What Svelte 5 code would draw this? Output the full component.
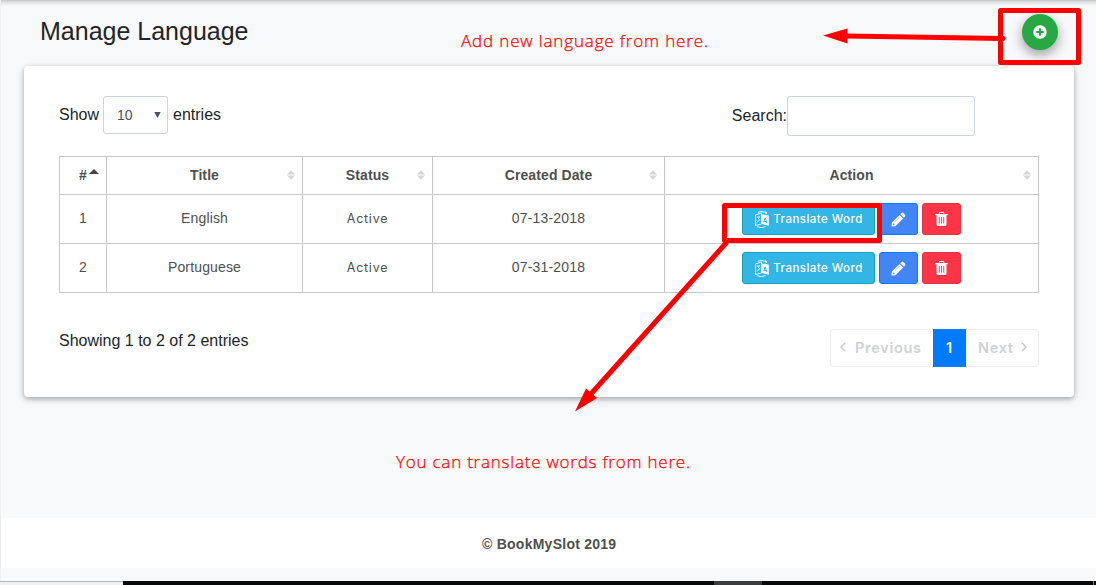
<script>
  const columns = [
    { label: '#', sort: 'asc' },
    { label: 'Title', sort: 'both' },
    { label: 'Status', sort: 'both' },
    { label: 'Created Date', sort: 'both' },
    { label: 'Action', sort: 'both' }
  ];
  const rows = [
    { id: 1, title: 'English', status: 'Active', created: '07-13-2018' },
    { id: 2, title: 'Portuguese', status: 'Active', created: '07-31-2018' }
  ];
</script>

<div class="page">
  <header>
    <h1>Manage Language</h1>
    <button class="add" aria-label="Add language">
      <svg width="14" height="14" viewBox="0 0 14 14">
        <path fill="#fff" fill-rule="evenodd" d="M7 .3a6.7 6.7 0 1 1 0 13.4A6.7 6.7 0 0 1 7 .3ZM6 3.2V6H3.2v2H6v2.8h2V8h2.8V6H8V3.2Z" />
      </svg>
    </button>
  </header>

  <main class="card">
    <div class="controls">
      <label class="length">Show
        <span class="select"><span>10</span><svg width="7" height="6" viewBox="0 0 7 6"><path d="M.3 0h6.4L3.5 6Z" fill="#495057" /></svg></span>
        entries</label>
      <label class="search">Search:<input type="text" aria-label="Search" /></label>
    </div>

    <table>
      <thead>
        <tr>
          {#each columns as col}
            <th>
              <div class="head">
                <span class="label">{col.label}</span>
                {#if col.sort === 'asc'}
                  <svg class="asc" width="10" height="5" viewBox="0 0 10 5"><path d="M5 0l5 5H0Z" fill="#444" /></svg>
                {:else}
                  <svg class="both" width="8" height="10" viewBox="0 0 8 10"><path d="M4 0l4 4.5H0ZM0 5.5h8L4 10Z" fill="#d6d6d6" /></svg>
                {/if}
              </div>
            </th>
          {/each}
        </tr>
      </thead>
      <tbody>
        {#each rows as row}
          <tr>
            <td>{row.id}</td>
            <td>{row.title}</td>
            <td class="status">{row.status}</td>
            <td class="date">{row.created}</td>
            <td class="action">
              <div class="actions">
                <button class="btn translate">
                  <svg width="16" height="17" viewBox="0 0 16 17" fill="none" stroke="#fff">
                    <path d="M1.5 4 7.5 2v11l-6 1.5Z" stroke-width=".9" />
                    <path d="M7.5 3.3 14.8 4.6v10.2L7.5 13Z" fill="#fff" stroke="none" />
                    <path d="M9.5 11.3 11.2 6.8l1.6 5.2M10 10.2l2.4.4" stroke="#33b5e5" stroke-width="1" />
                    <path d="M2.8 6.4l2.6-.7-1 2.1 1.3 1-2.5 2.6M4 1.3l4-.9 4.8 1.4M11 .7l2 1.2-1.6 1M3 15.7l4.5 1 4-1.2" stroke-width=".9" />
                  </svg>
                  <span>Translate Word</span>
                </button>
                <button class="btn edit" aria-label="Edit">
                  <svg width="15" height="15" viewBox="0 0 14 14">
                    <path fill="#fff" fill-rule="evenodd" d="M9.8.9q.8-.8 1.6 0l1.7 1.7q.8.8 0 1.6L12 5.3 8.7 2ZM8 2.7 11.3 6 4.1 13.2.4 13.6.8 9.9ZM1.9 10.9l-.2.8.6.6.8-.2.2-.9-.5-.5ZM7.6 4.9 3.8 8.7l.2.2 3.8-3.8Z" />
                  </svg>
                </button>
                <button class="btn remove" aria-label="Delete">
                  <svg width="13" height="14" viewBox="0 0 13 14">
                    <path fill="#fff" fill-rule="evenodd" d="M4.3 0h4.4l.8 2h3.2v1.3h-1.2V12.5q0 1.5-1.4 1.5H2.9q-1.4 0-1.4-1.5V3.3H.3V2h3.2ZM5 1l-.4 1h3.8L8 1ZM3.8 5v6.5h.9V5ZM6.05 5v6.5h.9V5ZM8.3 5v6.5h.9V5Z" />
                  </svg>
                </button>
              </div>
            </td>
          </tr>
        {/each}
      </tbody>
    </table>

    <div class="bottom">
      <p>Showing 1 to 2 of 2 entries</p>
      <nav>
        <span class="prev"><svg width="6" height="10" viewBox="0 0 6 10"><path d="M5.2.8 1 5l4.2 4.2" /></svg>Previous</span>
        <span class="current">1</span>
        <span class="next">Next<svg width="6" height="10" viewBox="0 0 6 10"><path d="M.8.8 5 5 .8 9.2" /></svg></span>
      </nav>
    </div>
  </main>

  <footer>© BookMySlot 2019</footer>
  <div class="taskbar"><i class="light"></i><i class="dark"></i><i class="active"></i><i class="dark end"></i></div>

  <svg class="notes" width="1096" height="585" viewBox="0 0 1096 585">
    <g fill="none" stroke="#f00" stroke-width="5" stroke-linejoin="round">
      <rect x="1000.5" y="10.5" width="78" height="52" />
      <rect x="724.5" y="205.5" width="155" height="35" />
      <path d="M1003 38.5 846 36" stroke-linecap="round" />
      <path d="M727 242 590 395" />
    </g>
    <path d="M823 35.5 847.5 28.5V43.5ZM575 411.5 586 388.5 597 398Z" fill="#f00" />
    <text x="461" y="47" textLength="247">Add new language from here.</text>
    <text x="396" y="468" textLength="294">You can translate words from here.</text>
  </svg>
</div>

<style>
  :global(body) { margin: 0; overflow: hidden; }
  * { box-sizing: border-box; }
  .page {
    position: relative;
    display: flex;
    flex-direction: column;
    width: 1096px;
    height: 585px;
    background: linear-gradient(#c4c5c7, #dddee0 2px, #f8f9fb 6px);
    box-shadow: inset 1px 0 #f0f0f0;
    font-family: "Liberation Sans", Arial, sans-serif;
    font-size: 16px;
    color: #212529;
  }
  header {
    display: flex;
    justify-content: space-between;
    align-items: flex-start;
    height: 66px;
    padding: 14px 38px 0 40px;
  }
  h1 { margin: 2px 0 0; font-size: 25px; line-height: 30px; font-weight: 400; }
  button { padding: 0; border: 0; font: inherit; }
  .add {
    display: flex;
    align-items: center;
    justify-content: center;
    width: 36px;
    height: 36px;
    border-radius: 50%;
    background: #28a745;
    box-shadow: 0 5px 11px rgba(0,0,0,.22), 0 4px 13px rgba(0,0,0,.18);
  }
  .card {
    height: 331px;
    margin: 0 22px 0 24px;
    padding: 30px 35px 0;
    border-radius: 4px;
    background: #fff;
    box-shadow: 0 2px 5px rgba(0,0,0,.26), 0 2px 10px rgba(0,0,0,.12);
  }
  .controls { display: flex; justify-content: space-between; height: 60px; padding-right: 64px; align-items: flex-start; }
  .length { display: flex; align-items: center; gap: 4px; height: 38px; }
  .select {
    display: flex;
    align-items: center;
    justify-content: space-between;
    width: 65px;
    height: 38px;
    margin-right: 1px;
    padding: 0 6px 0 13px;
    border: 1px solid #ced4da;
    border-radius: 3px;
    color: #495057;
    font-size: 14px;
  }
  .search { display: flex; align-items: center; }
  .search input { width: 188px; height: 40px; border: 1px solid #ced4da; border-radius: 3px; background: #fff; }
  table { width: 980px; table-layout: fixed; border-collapse: collapse; font-size: 14px; letter-spacing: .15px; color: #4f4f4f; }
  th, td { padding: 0; border: 1px solid #c8c8c8; text-align: center; }
  th { height: 38px; padding-bottom: 2px; letter-spacing: .1px; }
  td { height: 49px; padding-bottom: 3px; }
  td.action { padding-bottom: 1px; }
  th:nth-child(1) { width: 47px; }
  th:nth-child(2) { width: 196px; }
  th:nth-child(3) { width: 130px; }
  th:nth-child(4) { width: 232px; }
  .head { display: grid; grid-template-columns: 1fr; align-items: center; }
  .head > * { grid-area: 1 / 1; }
  .head .both { justify-self: end; margin-right: 7px; }
  .head .asc { justify-self: end; margin: 0 7px 7px 0; }
  .date { letter-spacing: .2px; }
  td.status { padding-bottom: 1px; font-family: Inter, sans-serif; font-size: 12.5px; letter-spacing: .75px; }
  .actions { display: flex; justify-content: center; gap: 4px; margin-top: 1px; }
  .btn { display: flex; align-items: center; justify-content: center; width: 39px; height: 32px; border: 1px solid; border-radius: 3px; color: #fff; }
  .translate {
    width: 133px;
    gap: 3px;
    background: #33b5e5;
    border-color: #17a2b8;
    font-family: Inter, sans-serif;
    font-size: 11.5px;
    font-weight: 500;
    letter-spacing: .45px;
  }
  .edit { background: #4285f4; border-color: #007bff; }
  .remove { background: #ff3547; border-color: #dc3545; }
  .bottom { display: flex; justify-content: space-between; padding-top: 36px; }
  .bottom p { margin: 2px 0 0; line-height: 20px; }
  nav {
    display: flex;
    width: 209px;
    height: 38px;
    border-radius: 4px;
    box-shadow: inset 0 0 0 1px #f1f1f1;
    font: 600 14.5px Inter, sans-serif;
    letter-spacing: .7px;
    color: #ced1d5;
  }
  nav span { display: flex; align-items: center; padding-bottom: 1px; }
  nav svg { margin-bottom: 1px; }
  nav path { fill: none; stroke: #c5c9ce; stroke-width: 1.4; }
  .prev { width: 103px; padding-left: 10px; gap: 9px; }
  .current { width: 33px; justify-content: center; background: #007bff; color: #fff; }
  .next { padding-left: 12px; gap: 7px; }
  footer {
    height: 50px;
    margin: 121px 0 0 1px;
    padding-left: 481px;
    line-height: 52px;
    background: #fff;
    font-size: 14px;
    font-weight: 700;
    letter-spacing: .25px;
    color: #4f4f4f;
  }
  .taskbar { display: flex; height: 4px; margin-top: 13px; }
  .light { width: 123px; background: #f1f1f1; border-top: 1px solid #b8b8b8; }
  .dark { width: 591px; background: #08090b; }
  .active { width: 48px; background: #3d3d3d; }
  .end { flex: 1; background: linear-gradient(90deg, #08090b 331px, #777 331px 332px, #08090b 332px); }
  .notes { position: absolute; inset: 0; pointer-events: none; }
  .notes text { fill: #f00; stroke: #f00; stroke-width: .25; font: 300 17px "Open Sans", sans-serif; }
</style>
